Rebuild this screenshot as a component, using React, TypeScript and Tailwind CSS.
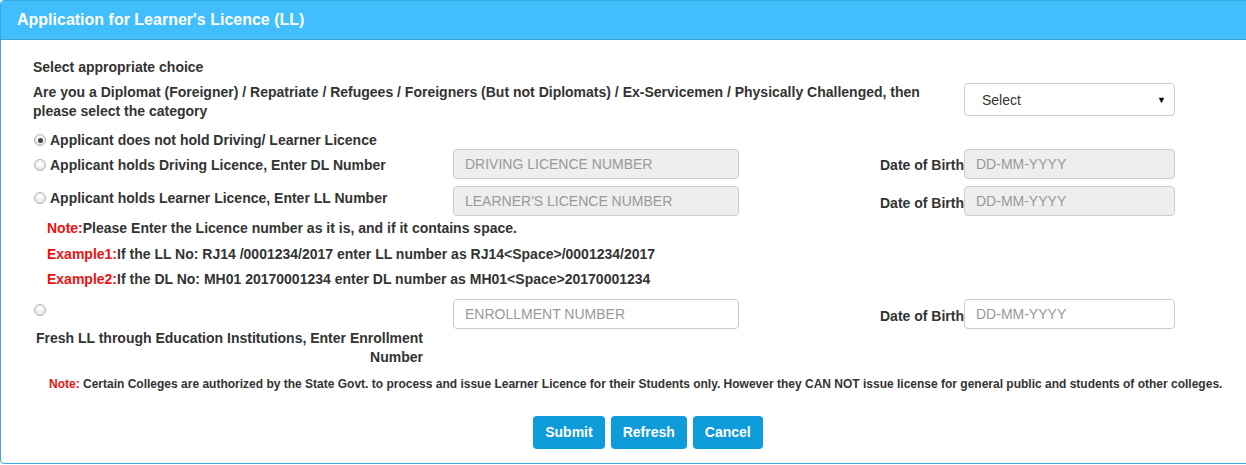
import React from "react";

function Radio({ checked = false }: { checked?: boolean }) {
  return (
    <span
      className="inline-flex items-center justify-center w-[12px] h-[12px] rounded-full border border-[#b0b0b0] shrink-0"
      style={{ background: "radial-gradient(circle at 50% 35%, #ffffff 0%, #ececec 60%, #d6d6d6 100%)" }}
    >
      {checked && <span className="w-[5px] h-[5px] rounded-full bg-[#444]" />}
    </span>
  );
}

function TextBox({ placeholder, disabled = false }: { placeholder: string; disabled?: boolean }) {
  return (
    <div
      className={`h-[30px] rounded-[4px] border border-[#cccccc] flex items-center px-[11px] text-[14px] font-normal text-[#999] ${
        disabled ? "bg-[#eeeeee]" : "bg-white"
      }`}
    >
      {placeholder}
    </div>
  );
}

export default function App() {
  return (
    <div className="w-[1246px] h-[465px] bg-white font-['Liberation_Sans',Arial,sans-serif] text-[#333]">
      <div className="w-[1250px] h-[464px] border border-[#3aa9dd] rounded-[4px] overflow-hidden">
        {/* heading */}
        <div className="h-[39px] bg-[#41befc] border-b border-[#3aa3d6] flex items-center pl-[16px]">
          <span className="text-white font-bold text-[16px]">Application for Learner's Licence (LL)</span>
        </div>

        <div className="pl-[32px] pt-[18px] text-[14px] font-bold leading-[18px]">
          <div>Select appropriate choice</div>

          <div className="mt-[7px] flex items-start">
            <div className="w-[900px] leading-[19px]">
              Are you a Diplomat (Foreigner) / Repatriate / Refugees / Foreigners (But not Diplomats) / Ex-Servicemen /
              Physically Challenged, then please select the category
            </div>
            <div className="ml-[31px] w-[211px] h-[33px] rounded-[4px] border border-[#cccccc] bg-white flex items-center justify-between pl-[17px] pr-[8px] font-normal text-[14px] text-[#333]">
              <span>Select</span>
              <span className="text-[9px] text-black">▼</span>
            </div>
          </div>

          {/* row 1 */}
          <div className="mt-[10px] flex items-center gap-[4px] pl-[1px]">
            <Radio checked />
            <span>Applicant does not hold Driving/ Learner Licence</span>
          </div>

          {/* row 2 */}
          <div className="grid grid-cols-[420px_286px_225px_211px]">
            <div className="flex items-center gap-[4px] pt-[7px] self-start pl-[1px]">
              <Radio />
              <span>Applicant holds Driving Licence, Enter DL Number</span>
            </div>
            <TextBox placeholder="DRIVING LICENCE NUMBER" disabled />
            <div className="text-right pt-[7px]">Date of Birth</div>
            <TextBox placeholder="DD-MM-YYYY" disabled />
          </div>

          {/* row 3 */}
          <div className="mt-[7px] grid grid-cols-[420px_286px_225px_211px]">
            <div className="flex items-center gap-[4px] pt-[3px] self-start pl-[1px]">
              <Radio />
              <span>Applicant holds Learner Licence, Enter LL Number</span>
            </div>
            <TextBox placeholder="LEARNER'S LICENCE NUMBER" disabled />
            <div className="text-right pt-[8px]">Date of Birth</div>
            <TextBox placeholder="DD-MM-YYYY" disabled />
          </div>

          {/* notes */}
          <div className="pl-[14px]">
            <div className="leading-[25.5px]">
              <span className="text-[#ee1111]">Note:</span>Please Enter the Licence number as it is, and if it contains space.
            </div>
            <div className="leading-[25.5px]">
              <span className="text-[#ee1111]">Example1:</span>If the LL No: RJ14 /0001234/2017 enter LL number as RJ14&lt;Space&gt;/0001234/2017
            </div>
            <div className="leading-[25.5px]">
              <span className="text-[#ee1111]">Example2:</span>If the DL No: MH01 20170001234 enter DL number as MH01&lt;Space&gt;20170001234
            </div>
          </div>

          {/* row 4 */}
          <div className="mt-[6px] grid grid-cols-[420px_286px_225px_211px]">
            <div className="pl-[1px]">
              <div className="pt-[3px] h-[30px]">
                <Radio />
              </div>
              <div className="text-right pr-[30px] leading-[19px]">
                Fresh LL through Education Institutions, Enter Enrollment Number
              </div>
            </div>
            <TextBox placeholder="ENROLLMENT NUMBER" />
            <div className="text-right pt-[8px]">Date of Birth</div>
            <TextBox placeholder="DD-MM-YYYY" />
          </div>

          <div className="mt-[9px] pl-[16px] text-[12px] font-bold leading-[16px]">
            <span className="text-[#ee1111]">Note:</span> Certain Colleges are authorized by the State Govt. to process and
            issue Learner Licence for their Students only. However they CAN NOT issue license for general public and
            students of other colleges.
          </div>

          <div className="mt-[24px] flex justify-center gap-[6px] pl-[14px]">
            <button className="h-[33px] px-[12px] rounded-[4px] bg-[#0e9bd9] text-white text-[14px] font-bold">Submit</button>
            <button className="h-[33px] px-[12px] rounded-[4px] bg-[#0e9bd9] text-white text-[14px] font-bold">Refresh</button>
            <button className="h-[33px] px-[12px] rounded-[4px] bg-[#0e9bd9] text-white text-[14px] font-bold">Cancel</button>
          </div>
        </div>
      </div>
    </div>
  );
}
